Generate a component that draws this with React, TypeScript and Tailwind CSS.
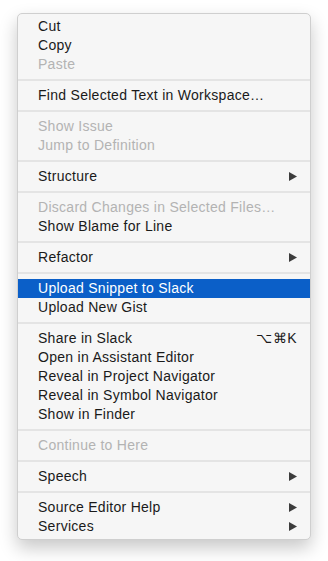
import React from "react";

type Item = {
    label: string;
    disabled?: boolean;
    submenu?: boolean;
    shortcut?: string;
    selected?: boolean;
};

// Groups are separated by a thin line
const groups: Item[][] = [
    [{ label: "Cut" }, { label: "Copy" }, { label: "Paste", disabled: true }],
    [{ label: "Find Selected Text in Workspace…" }],
    [
        { label: "Show Issue", disabled: true },
        { label: "Jump to Definition", disabled: true },
    ],
    [{ label: "Structure", submenu: true }],
    [
        { label: "Discard Changes in Selected Files…", disabled: true },
        { label: "Show Blame for Line" },
    ],
    [{ label: "Refactor", submenu: true }],
    [{ label: "Upload Snippet to Slack", selected: true }, { label: "Upload New Gist" }],
    [
        { label: "Share in Slack", shortcut: "⌥⌘K" },
        { label: "Open in Assistant Editor" },
        { label: "Reveal in Project Navigator" },
        { label: "Reveal in Symbol Navigator" },
        { label: "Show in Finder" },
    ],
    [{ label: "Continue to Here", disabled: true }],
    [{ label: "Speech", submenu: true }],
    [{ label: "Source Editor Help", submenu: true }, { label: "Services", submenu: true }],
];

function Arrow({ white }: { white?: boolean }) {
    return (
        <svg width="8" height="9" viewBox="0 0 8 9" aria-hidden="true">
            <path d="M0 0 L8 4.5 L0 9 Z" fill={white ? "#ffffff" : "#3c3c3c"} />
        </svg>
    );
}

function MenuRow({ item }: { item: Item }) {
    const color = item.selected
        ? "bg-[#0b5fc8] text-white"
        : item.disabled
        ? "text-[#b3b3b3]"
        : "text-[#1a1a1a]";

    return (
        <div className={`flex h-[19px] items-center pl-[20px] pr-[13px] ${color}`}>
            <span className="flex-1 whitespace-nowrap leading-[19px] tracking-[0.28px]">{item.label}</span>
            {item.shortcut && (
                <span className="whitespace-nowrap leading-[19px] tracking-[0.5px]">{item.shortcut}</span>
            )}
            {item.submenu && <Arrow white={item.selected} />}
        </div>
    );
}

export default function App() {
    return (
        <div className="h-[561px] w-[328px] bg-white pl-[17px] pt-[13px]">
            <div
                className="w-[294px] rounded-[5px] border border-[#cfcfcf] bg-[#f6f6f6] pb-[3px] pt-[3px] text-[14px] shadow-[0_8px_18px_rgba(0,0,0,0.22)]"
                style={{ fontFamily: '"Liberation Sans", Arial, sans-serif' }}
            >
                {groups.map((group, gi) => (
                    <div key={gi}>
                        {gi > 0 && (
                            <div className="flex h-[12px] items-center">
                                <div className="h-[2px] w-full bg-[#e4e4e4]" />
                            </div>
                        )}
                        {group.map((item) => (
                            <MenuRow key={item.label} item={item} />
                        ))}
                    </div>
                ))}
            </div>
        </div>
    );
}
